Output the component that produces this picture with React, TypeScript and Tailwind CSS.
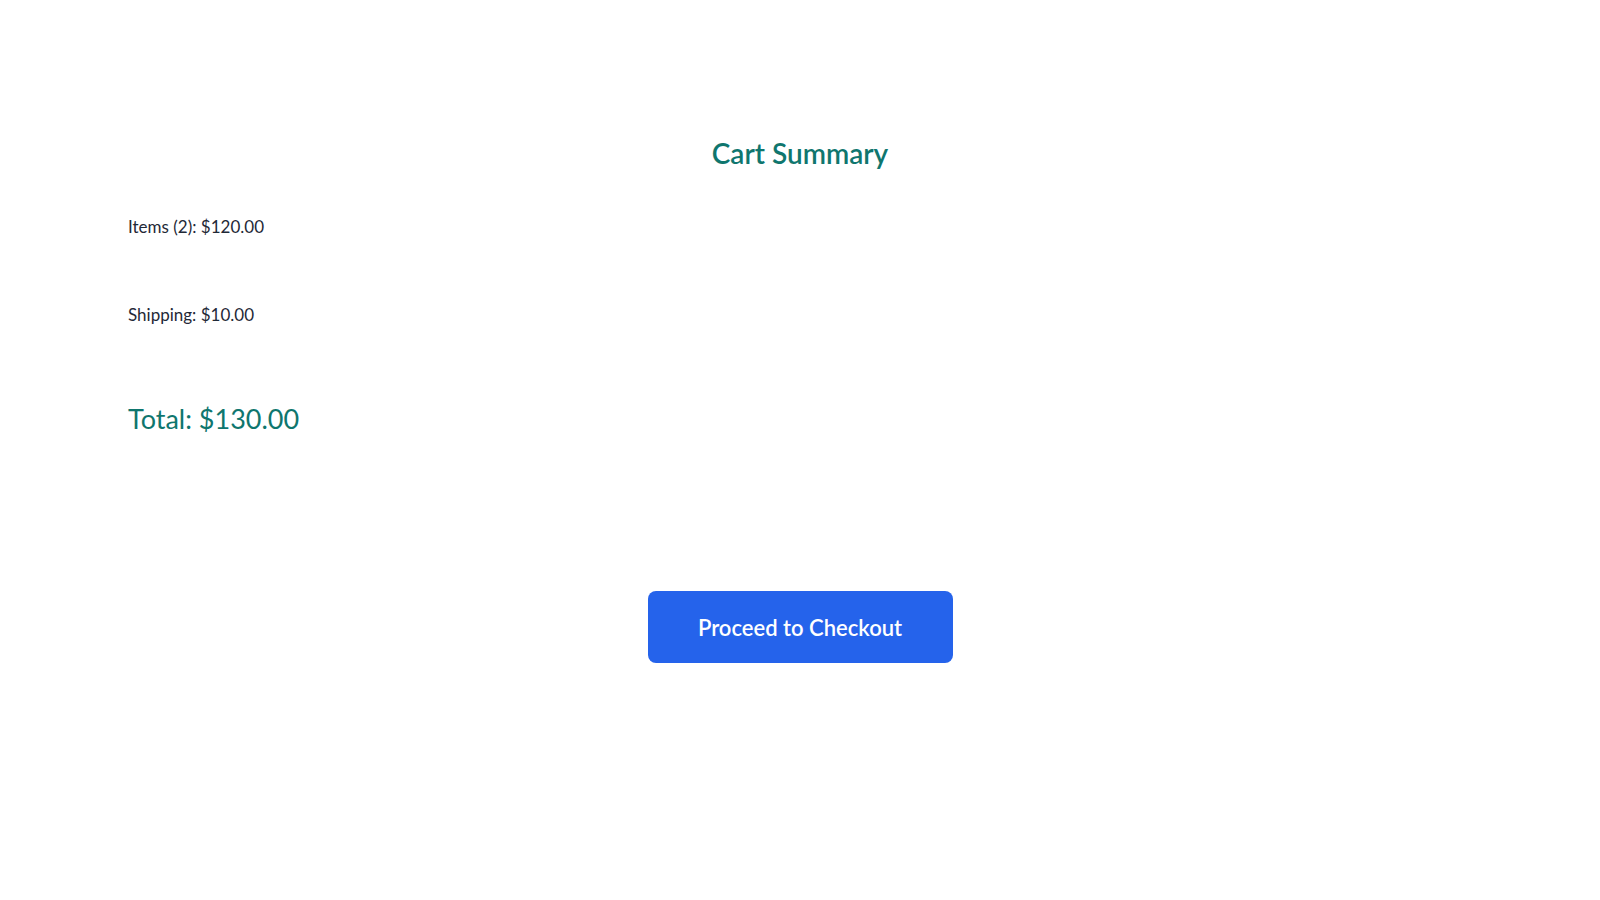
import React from 'react';

const summary = {
    itemCount: 2,
    itemsTotal: 120,
    shipping: 10,
};

const money = (n: number) => `$${n.toFixed(2)}`;

export default function App() {
    const total = summary.itemsTotal + summary.shipping;

    return (
        <div className="min-h-screen bg-white font-['Lato',_'Noto_Sans',_sans-serif] text-[#1f2937]">
            <div className="px-[128px] pt-[135px]">
                <h2 className="text-center text-[28px] leading-[36px] font-semibold text-[#0f766e]">
                    Cart Summary
                </h2>

                <p className="mt-[44px] text-[17px] leading-[24px]">
                    Items ({summary.itemCount}): {money(summary.itemsTotal)}
                </p>
                <p className="mt-[64px] text-[17px] leading-[24px]">
                    Shipping: {money(summary.shipping)}
                </p>

                <p className="mt-[74px] text-[27px] leading-[35px] text-[#0f766e]">
                    Total: {money(total)}
                </p>

                <div className="mt-[155px] flex justify-center">
                    <button className="h-[72px] w-[305px] rounded-lg bg-[#2563eb] text-[22px] font-semibold text-white">
                        Proceed to Checkout
                    </button>
                </div>
            </div>
        </div>
    );
}
